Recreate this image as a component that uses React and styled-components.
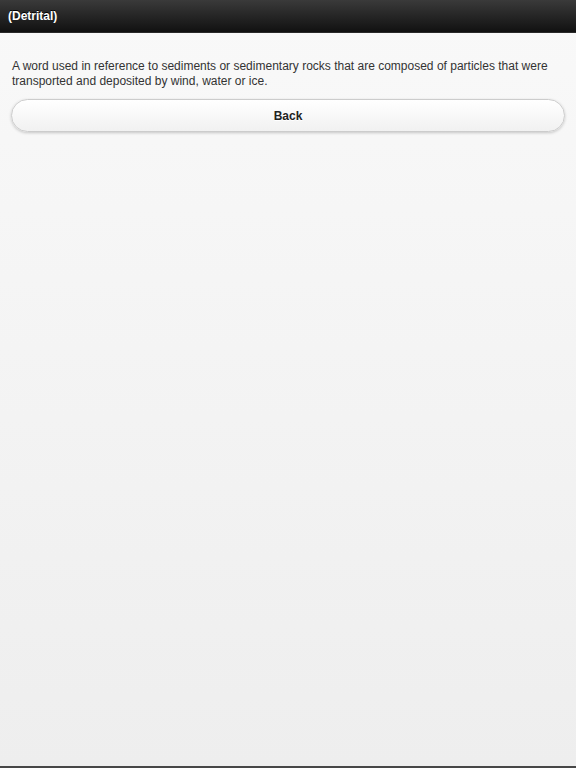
import React from "react";
import styled, { createGlobalStyle } from "styled-components";

const Global = createGlobalStyle`
  html, body { margin: 0; padding: 0; height: 100%; }
  body { font-family: "Liberation Sans", Arial, sans-serif; }
  #root { height: 100%; }
`;

const Page = styled.div`
  height: 768px;
  box-sizing: border-box;
  display: flex;
  flex-direction: column;
  background: linear-gradient(#f9f9f9, #eeeeee);
  border-bottom: 2px solid #474747;
`;

const Header = styled.header`
  height: 33px;
  box-sizing: border-box;
  background: linear-gradient(#3a3a3a, #111111);
  border-bottom: 1px solid #2a2a2a;
  display: flex;
  align-items: center;
  padding: 0 8px;
`;

const Title = styled.h1`
  margin: 0;
  color: #fff;
  font-size: 12px;
  font-weight: bold;
  text-shadow: 0 -1px 0 #000;
`;

const Content = styled.main`
  padding: 26px 11px 0;
  display: flex;
  flex-direction: column;
  gap: 10px;
`;

const Text = styled.p`
  margin: 0 1px;
  font-size: 12px;
  line-height: 15px;
  color: #333;
`;

const Button = styled.button`
  height: 33px;
  width: 100%;
  border-radius: 17px;
  border: 1px solid #cccccc;
  background: linear-gradient(#ffffff, #f1f1f1);
  box-shadow: 0 1px 3px rgba(0, 0, 0, 0.2);
  font-family: inherit;
  font-size: 12px;
  font-weight: bold;
  color: #222;
  text-shadow: 0 1px 0 #fff;
`;

export default function App() {
  return (
    <>
      <Global />
      <Page>
        <Header>
          <Title>(Detrital)</Title>
        </Header>
        <Content>
          <Text>
            A word used in reference to sediments or sedimentary rocks that are composed of particles that were
            transported and deposited by wind, water or ice.
          </Text>
          <Button>Back</Button>
        </Content>
      </Page>
    </>
  );
}
